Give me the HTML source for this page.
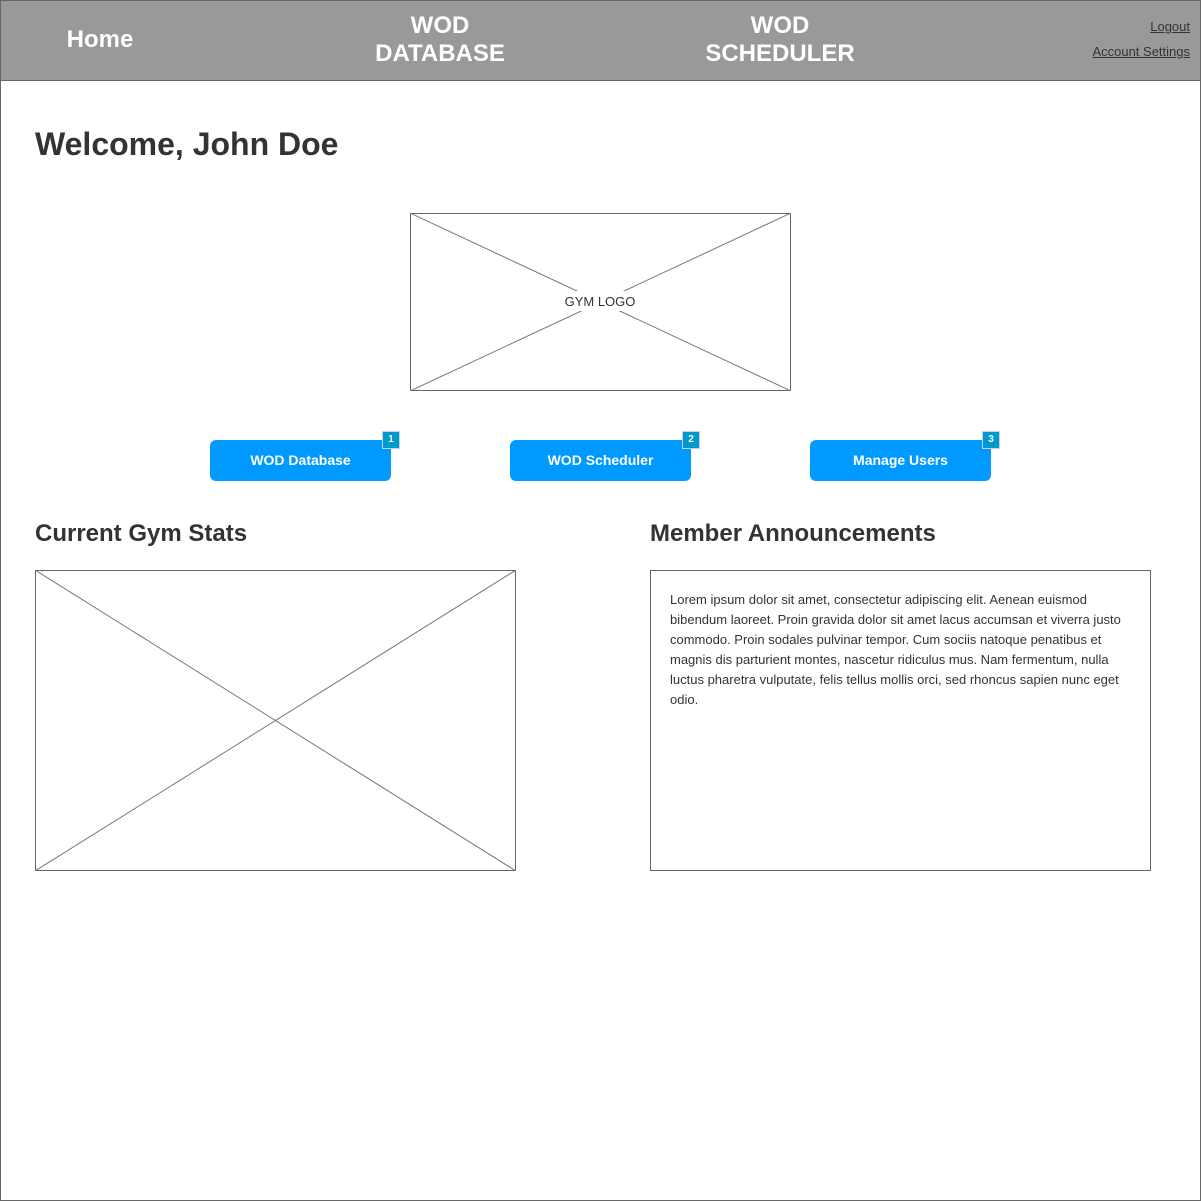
<!DOCTYPE html>
<html><head><meta charset="utf-8"><style>
*{margin:0;padding:0;box-sizing:border-box}
body{width:1201px;height:1201px;background:#fff;font-family:"Liberation Sans",Arial,sans-serif;position:relative;overflow:hidden}
.frame{position:absolute;left:0;top:0;width:1201px;height:1201px;border:1px solid #666}
.nav{position:absolute;left:0;top:0;width:1201px;height:81px;background:#999;border:1px solid #666}
.nl{position:absolute;color:#fff;font-weight:bold;font-size:24px;line-height:28px;text-align:center}
.lk{position:absolute;right:11px;color:#333;font-size:13px;text-decoration:underline}
h1{position:absolute;left:35px;top:126px;font-size:32px;color:#333}
h2{position:absolute;font-size:24px;color:#333}
.btn{position:absolute;top:440px;width:181px;height:41px;background:#0099ff;border-radius:6px;color:#fff;font-weight:bold;font-size:14px;line-height:41px;text-align:center}
.bd{position:absolute;top:-9px;right:-9px;width:18px;height:18px;background:#0099cc;border:1px solid #cce;color:#fff;font-size:10px;line-height:16px;text-align:center}
svg{position:absolute}
.txt{position:absolute;left:650px;top:570px;width:501px;height:301px;border:1px solid #666;padding:19px 19px;font-size:13px;line-height:20px;color:#333}
</style></head><body>
<div class="frame"></div>
<div class="nav"></div>
<div class="nl" style="left:40px;top:26px;width:120px">Home</div>
<div class="nl" style="left:340px;top:12px;width:200px">WOD<br>DATABASE</div>
<div class="nl" style="left:680px;top:12px;width:200px">WOD<br>SCHEDULER</div>
<div class="lk" style="top:19px">Logout</div>
<div class="lk" style="top:44px">Account Settings</div>
<h1>Welcome, John Doe</h1>
<svg style="left:410px;top:213px" width="381" height="178"><rect x="0.5" y="0.5" width="380" height="177" fill="#fff" stroke="#666"/><line x1="0" y1="0" x2="381" y2="178" stroke="#777"/><line x1="381" y1="0" x2="0" y2="178" stroke="#777"/><rect x="150" y="78" width="80" height="20" fill="#fff"/><text x="190" y="93" text-anchor="middle" font-family="Liberation Sans" font-size="13" fill="#333">GYM LOGO</text></svg>
<div class="btn" style="left:210px">WOD Database<div class="bd">1</div></div>
<div class="btn" style="left:510px">WOD Scheduler<div class="bd">2</div></div>
<div class="btn" style="left:810px">Manage Users<div class="bd">3</div></div>
<h2 style="left:35px;top:520px">Current Gym Stats</h2>
<h2 style="left:650px;top:520px">Member Announcements</h2>
<svg style="left:35px;top:570px" width="481" height="301"><rect x="0.5" y="0.5" width="480" height="300" fill="#fff" stroke="#666"/><line x1="0" y1="0" x2="481" y2="301" stroke="#777"/><line x1="481" y1="0" x2="0" y2="301" stroke="#777"/></svg>
<div class="txt">Lorem ipsum dolor sit amet, consectetur adipiscing elit. Aenean euismod bibendum laoreet. Proin gravida dolor sit amet lacus accumsan et viverra justo commodo. Proin sodales pulvinar tempor. Cum sociis natoque penatibus et magnis dis parturient montes, nascetur ridiculus mus. Nam fermentum, nulla luctus pharetra vulputate, felis tellus mollis orci, sed rhoncus sapien nunc eget odio.</div>
</body></html>
